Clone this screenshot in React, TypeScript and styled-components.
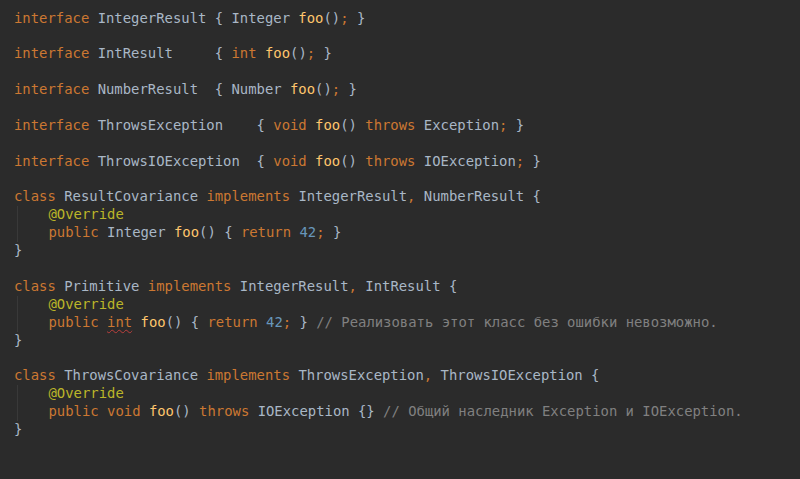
import React from "react";
import styled, { createGlobalStyle } from "styled-components";

const Global = createGlobalStyle`
  html, body { margin: 0; padding: 0; background: #2b2b2b; }
  #root { width: 800px; height: 479px; }
`;

type Kind = "kw" | "id" | "fn" | "an" | "num" | "cm" | "pu" | "err";

const colors: Record<Kind, string> = {
  kw: "#cc7832",
  id: "#a9b7c6",
  fn: "#ffc66d",
  an: "#bbb529",
  num: "#6897bb",
  cm: "#808080",
  pu: "#cc7832",
  err: "#cc7832",
};

const Editor = styled.div`
  width: 800px;
  height: 479px;
  box-sizing: border-box;
  background: #2b2b2b;
  padding: 9.5px 0 0 14px;
  font-family: "DejaVu Sans Mono", "Liberation Mono", monospace;
  font-size: 13.9px;
  line-height: 17.9px;
  color: #a9b7c6;
  white-space: pre;
  overflow: hidden;
`;

const Line = styled.div`
  height: 17.9px;
`;

const Block = styled.div`
  display: flex;
  flex-direction: column;
`;

const Body = styled.div`
  display: flex;
  flex-direction: column;
  margin-left: 3px;
  padding-left: 30.5px;
  border-left: 1px solid #393939;
`;

const Tok = styled.span<{ $k: Kind }>`
  color: ${(p) => colors[p.$k]};
  ${(p) =>
    p.$k === "err"
      ? `text-decoration: underline wavy #bc3f3c; text-decoration-thickness: 1px; text-underline-offset: 2px;`
      : ""}
`;

type T = [Kind, string];

const k = (s: string): T => ["kw", s];
const i = (s: string): T => ["id", s];
const f = (s: string): T => ["fn", s];
const a = (s: string): T => ["an", s];
const n = (s: string): T => ["num", s];
const c = (s: string): T => ["cm", s];
const p = (s: string): T => ["pu", s];

const Code: React.FC<{ toks: T[] }> = ({ toks }) => (
  <Line>
    {toks.map(([kind, text], idx) => (
      <Tok key={idx} $k={kind}>
        {text}
      </Tok>
    ))}
    {toks.length === 0 ? " " : null}
  </Line>
);

const interfaces: T[][] = [
  [k("interface"), i(" IntegerResult { Integer "), f("foo"), i("()"), p(";"), i(" }")],
  [],
  [k("interface"), i(" IntResult     { "), k("int"), i(" "), f("foo"), i("()"), p(";"), i(" }")],
  [],
  [k("interface"), i(" NumberResult  { Number "), f("foo"), i("()"), p(";"), i(" }")],
  [],
  [k("interface"), i(" ThrowsException    { "), k("void"), i(" "), f("foo"), i("() "), k("throws"), i(" Exception"), p(";"), i(" }")],
  [],
  [k("interface"), i(" ThrowsIOException  { "), k("void"), i(" "), f("foo"), i("() "), k("throws"), i(" IOException"), p(";"), i(" }")],
  [],
];

type ClassDef = { head: T[]; body: T[][] };

const classes: ClassDef[] = [
  {
    head: [k("class"), i(" ResultCovariance "), k("implements"), i(" IntegerResult"), p(","), i(" NumberResult {")],
    body: [
      [a("@Override")],
      [k("public"), i(" Integer "), f("foo"), i("() { "), k("return"), i(" "), n("42"), p(";"), i(" }")],
    ],
  },
  {
    head: [k("class"), i(" Primitive "), k("implements"), i(" IntegerResult"), p(","), i(" IntResult {")],
    body: [
      [a("@Override")],
      [
        k("public"),
        i(" "),
        ["err", "int"],
        i(" "),
        f("foo"),
        i("() { "),
        k("return"),
        i(" "),
        n("42"),
        p(";"),
        i(" } "),
        c("// Реализовать этот класс без ошибки невозможно."),
      ],
    ],
  },
  {
    head: [k("class"), i(" ThrowsCovariance "), k("implements"), i(" ThrowsException"), p(","), i(" ThrowsIOException {")],
    body: [
      [a("@Override")],
      [
        k("public"),
        i(" "),
        k("void"),
        i(" "),
        f("foo"),
        i("() "),
        k("throws"),
        i(" IOException {} "),
        c("// Общий наследник Exception и IOException."),
      ],
    ],
  },
];

export default function App() {
  return (
    <>
      <Global />
      <Editor>
        {interfaces.map((t, idx) => (
          <Code key={idx} toks={t} />
        ))}
        {classes.map((cls, ci) => (
          <Block key={ci}>
            <Code toks={cls.head} />
            <Body>
              {cls.body.map((t, bi) => (
                <Code key={bi} toks={t} />
              ))}
            </Body>
            <Code toks={[i("}")]} />
            {ci < classes.length - 1 ? <Code toks={[]} /> : null}
          </Block>
        ))}
      </Editor>
    </>
  );
}
